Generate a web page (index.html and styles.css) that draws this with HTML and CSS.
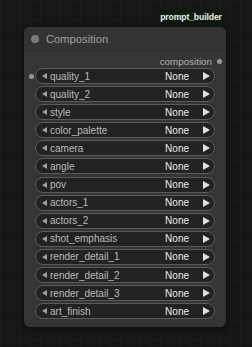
FILE: index.html
```html
<!DOCTYPE html>
<html lang="en">
<head>
    <meta charset="UTF-8">
    <title>Composition</title>
    <link rel="stylesheet" href="styles.css">
</head>
<body>
    <div class="canvas">
        <div class="node-badge">prompt_builder</div>
        <div class="node">
            <div class="node-title">
                <span class="title-dot"></span>
                <span class="title-text">Composition</span>
            </div>
            <div class="node-output">
                <span>composition</span>
                <span class="slot-dot"></span>
            </div>
            <div class="widgets">
                <div class="widget"><span class="input-dot"></span><span class="arrow-left"></span><span class="widget-label">quality_1</span><span class="widget-value">None</span><span class="arrow-right"></span></div>
                <div class="widget"><span class="arrow-left"></span><span class="widget-label">quality_2</span><span class="widget-value">None</span><span class="arrow-right"></span></div>
                <div class="widget"><span class="arrow-left"></span><span class="widget-label">style</span><span class="widget-value">None</span><span class="arrow-right"></span></div>
                <div class="widget"><span class="arrow-left"></span><span class="widget-label">color_palette</span><span class="widget-value">None</span><span class="arrow-right"></span></div>
                <div class="widget"><span class="arrow-left"></span><span class="widget-label">camera</span><span class="widget-value">None</span><span class="arrow-right"></span></div>
                <div class="widget"><span class="arrow-left"></span><span class="widget-label">angle</span><span class="widget-value">None</span><span class="arrow-right"></span></div>
                <div class="widget"><span class="arrow-left"></span><span class="widget-label">pov</span><span class="widget-value">None</span><span class="arrow-right"></span></div>
                <div class="widget"><span class="arrow-left"></span><span class="widget-label">actors_1</span><span class="widget-value">None</span><span class="arrow-right"></span></div>
                <div class="widget"><span class="arrow-left"></span><span class="widget-label">actors_2</span><span class="widget-value">None</span><span class="arrow-right"></span></div>
                <div class="widget"><span class="arrow-left"></span><span class="widget-label">shot_emphasis</span><span class="widget-value">None</span><span class="arrow-right"></span></div>
                <div class="widget"><span class="arrow-left"></span><span class="widget-label">render_detail_1</span><span class="widget-value">None</span><span class="arrow-right"></span></div>
                <div class="widget"><span class="arrow-left"></span><span class="widget-label">render_detail_2</span><span class="widget-value">None</span><span class="arrow-right"></span></div>
                <div class="widget"><span class="arrow-left"></span><span class="widget-label">render_detail_3</span><span class="widget-value">None</span><span class="arrow-right"></span></div>
                <div class="widget"><span class="arrow-left"></span><span class="widget-label">art_finish</span><span class="widget-value">None</span><span class="arrow-right"></span></div>
            </div>
        </div>
    </div>
</body>
</html>
```

FILE: styles.css
```css
* {
    margin: 0;
    padding: 0;
    box-sizing: border-box;
    font-family: 'Liberation Sans', Arial, sans-serif;
}

body {
    width: 252px;
    height: 347px;
    overflow: hidden;
    background-color: #161616;
    background-image:
        linear-gradient(to right, #1b1b1b 1px, transparent 1px),
        linear-gradient(to bottom, #1b1b1b 1px, transparent 1px);
    background-size: 10px 10px;
}

.canvas {
    display: flex;
    flex-direction: column;
    align-items: flex-start;
    padding: 10px 0 0 24px;
}

.node-badge {
    margin-left: 133px;
    width: 68px;
    height: 15px;
    background: #0d1a0d;
    color: #eeeeee;
    font-size: 8.6px;
    font-weight: bold;
    line-height: 15px;
    text-align: center;
    letter-spacing: -0.1px;
    border-radius: 2px 2px 0 0;
}

.node {
    margin-top: 2px;
    width: 202px;
    height: 300px;
    background: #353535;
    border-radius: 6px;
    box-shadow: 0 2px 6px rgba(0, 0, 0, 0.5);
}

.node-title {
    display: flex;
    align-items: center;
    height: 24px;
    padding-left: 7px;
    border-bottom: 1px solid #2d2d2d;
    background: #333333;
    border-radius: 6px 6px 0 0;
}

.title-dot {
    width: 8px;
    height: 8px;
    border-radius: 50%;
    background: #7a7a7a;
}

.title-text {
    margin-left: 7px;
    color: #a0a0a0;
    font-size: 11.2px;
}

.node-output {
    display: flex;
    justify-content: flex-end;
    align-items: center;
    height: 17px;
    padding: 3px 4px 0 0;
    color: #b0b0b0;
    font-size: 9.8px;
}

.slot-dot {
    width: 5px;
    height: 5px;
    margin-left: 5px;
    border-radius: 50%;
    background: #9595ad;
}

.widgets {
    display: flex;
    flex-direction: column;
    gap: 2.1px;
    padding: 0 11px;
}

.widget {
    position: relative;
    display: flex;
    align-items: center;
    height: 16px;
    padding: 0 4px 0 6px;
    background: #222222;
    border: 1px solid #5a5a5a;
    border-radius: 8px;
    font-size: 10px;
}

.input-dot {
    position: absolute;
    left: -7px;
    top: 5px;
    width: 5px;
    height: 5px;
    border-radius: 50%;
    background: #9595ad;
}

.arrow-left {
    width: 0;
    height: 0;
    border-top: 3.5px solid transparent;
    border-bottom: 3.5px solid transparent;
    border-right: 5px solid #a0a0a0;
}

.widget-label {
    flex: 1;
    margin-left: 3px;
    color: #bcbcbc;
}

.widget-value {
    color: #ebebeb;
    margin-right: 14px;
}

.arrow-right {
    width: 0;
    height: 0;
    border-top: 4px solid transparent;
    border-bottom: 4px solid transparent;
    border-left: 7px solid #e0e0e0;
}
```
